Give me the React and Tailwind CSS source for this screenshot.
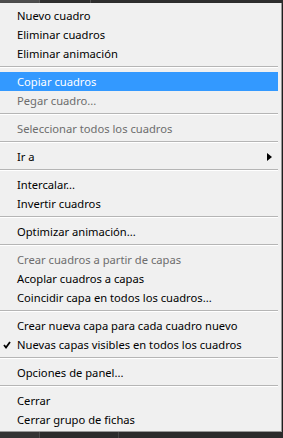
import React from "react";

const groups = [
  [
    { label: "Nuevo cuadro" },
    { label: "Eliminar cuadros" },
    { label: "Eliminar animación" },
  ],
  [
    { label: "Copiar cuadros", active: true },
    { label: "Pegar cuadro...", disabled: true },
  ],
  [{ label: "Seleccionar todos los cuadros", disabled: true }],
  [{ label: "Ir a", submenu: true }],
  [{ label: "Intercalar..." }, { label: "Invertir cuadros" }],
  [{ label: "Optimizar animación..." }],
  [
    { label: "Crear cuadros a partir de capas", disabled: true },
    { label: "Acoplar cuadros a capas" },
    { label: "Coincidir capa en todos los cuadros..." },
  ],
  [
    { label: "Crear nueva capa para cada cuadro nuevo" },
    { label: "Nuevas capas visibles en todos los cuadros", checked: true },
  ],
  [{ label: "Opciones de panel..." }],
  [{ label: "Cerrar" }, { label: "Cerrar grupo de fichas" }],
];

function MenuItem({ item }) {
  let cls = "text-black";
  if (item.disabled) cls = "text-[#6d6d6d]";
  if (item.active) cls = "bg-[#3399ff] text-white";
  return (
    <div className={`relative flex h-[19px] items-center w-[278px] pl-[17px] ${cls}`}>
      {item.checked && (
        <svg className="absolute left-[3px] top-[6px]" width="8" height="8" viewBox="0 0 8 8">
          <path d="M1 4 L3 6.5 L7 1" fill="none" stroke="#000" strokeWidth="1.8" />
        </svg>
      )}
      <span>{item.label}</span>
      {item.submenu && (
        <svg className="absolute left-[267px] top-[6px]" width="5" height="8" viewBox="0 0 5 8">
          <path d="M0 0 L5 4 L0 8 Z" fill="#000" />
        </svg>
      )}
    </div>
  );
}

function Separator() {
  return (
    <div className="h-[9px] pt-[3px] w-[278px]">
      <div className="h-px bg-[#b5b5b5]" />
      <div className="h-px bg-white" />
    </div>
  );
}

export default function App() {
  return (
    <div
      className="w-[283px] h-[438px] bg-[#2b2b2b] flex flex-col overflow-hidden"
      style={{ fontFamily: '"Noto Sans", sans-serif' }}
    >
      <div className="flex h-[3px]">
        <div className="w-[39px] bg-[#4d4d4d]" />
        <div className="w-px bg-[#5a5a5a]" />
        <div className="w-[50px] bg-[#2e2e2e]" />
        <div className="w-px bg-[#505050]" />
        <div className="flex-1 bg-[#2e2e2e]" />
      </div>
      <div className="flex">
        <div className="w-[282px] bg-[#f0f0f0] border-r border-b border-[#979797] pt-[3px] pb-[2px] text-[11.2px] leading-[19px] shadow-[1px_1px_2px_rgba(0,0,0,0.4)]">
          {groups.map((g, gi) => (
            <React.Fragment key={gi}>
              {gi > 0 && <Separator />}
              {g.map((item) => (
                <MenuItem key={item.label} item={item} />
              ))}
            </React.Fragment>
          ))}
        </div>
      </div>
      <div className="flex flex-1">
        <div className="w-[39px] bg-[#333333]" />
        <div className="w-px bg-[#4a4a4a]" />
        <div className="w-[78px] bg-[#2b2b2b]" />
        <div className="w-px bg-[#444444]" />
        <div className="flex-1 bg-[#2b2b2b]" />
      </div>
    </div>
  );
}
